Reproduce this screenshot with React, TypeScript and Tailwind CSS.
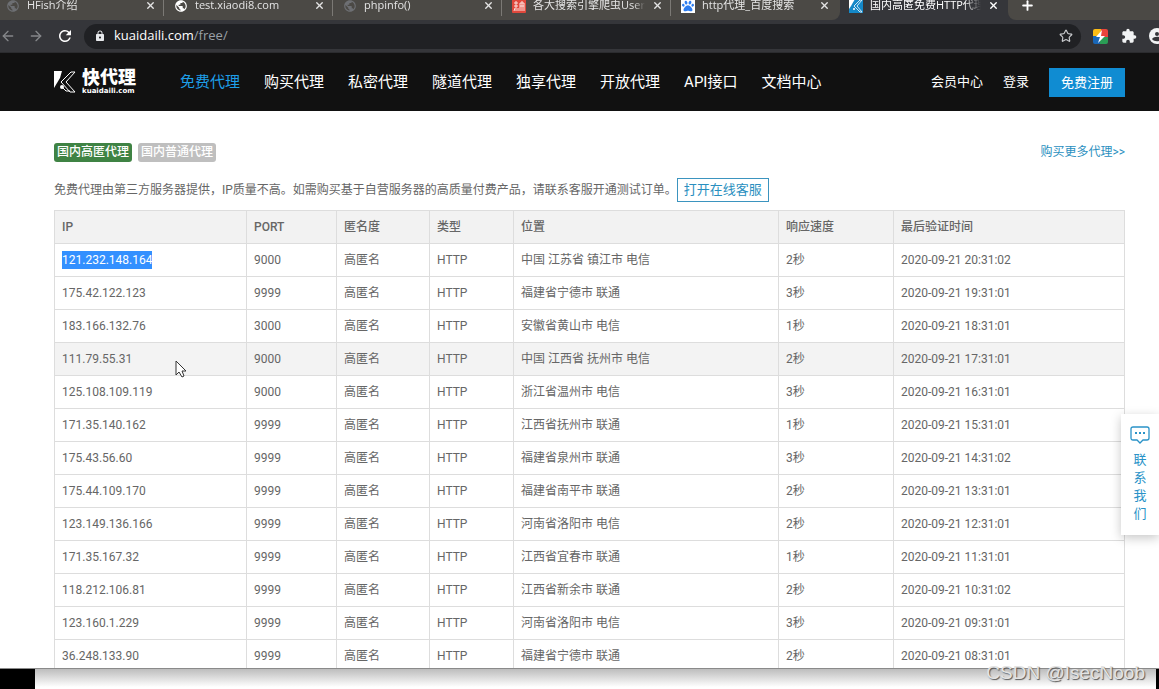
import { ArrowLeft, ArrowRight, Plus, Star, X } from "lucide-react";
import { MdExtension, MdLock, MdPublic, MdRefresh } from "react-icons/md";
import { FaPaw } from "react-icons/fa";

type Favicon = "globe" | "globe-bright" | "red" | "baidu" | "kuai";

interface Tab {
  title: string;
  icon: Favicon;
}

const TABS: Tab[] = [
  { title: "HFish介绍", icon: "globe" },
  { title: "test.xiaodi8.com", icon: "globe-bright" },
  { title: "phpinfo()", icon: "globe" },
  { title: "各大搜索引擎爬虫User-", icon: "red" },
  { title: "http代理_百度搜索", icon: "baidu" },
];

const NAV_ITEMS = ["免费代理", "购买代理", "私密代理", "隧道代理", "独享代理", "开放代理", "API接口", "文档中心"];

const COLUMNS = [
  { label: "IP", width: "w-[192px]" },
  { label: "PORT", width: "w-[90px]" },
  { label: "匿名度", width: "w-[93px]" },
  { label: "类型", width: "w-[84px]" },
  { label: "位置", width: "w-[265px]" },
  { label: "响应速度", width: "w-[115px]" },
  { label: "最后验证时间", width: "" },
];

const PROXIES = [
  { ip: "121.232.148.164", port: 9000, place: "中国 江苏省 镇江市 电信", speed: 2, checked: "20:31:02" },
  { ip: "175.42.122.123", port: 9999, place: "福建省宁德市 联通", speed: 3, checked: "19:31:01" },
  { ip: "183.166.132.76", port: 3000, place: "安徽省黄山市 电信", speed: 1, checked: "18:31:01" },
  { ip: "111.79.55.31", port: 9000, place: "中国 江西省 抚州市 电信", speed: 2, checked: "17:31:01" },
  { ip: "125.108.109.119", port: 9000, place: "浙江省温州市 电信", speed: 3, checked: "16:31:01" },
  { ip: "171.35.140.162", port: 9999, place: "江西省抚州市 联通", speed: 1, checked: "15:31:01" },
  { ip: "175.43.56.60", port: 9999, place: "福建省泉州市 联通", speed: 3, checked: "14:31:02" },
  { ip: "175.44.109.170", port: 9999, place: "福建省南平市 联通", speed: 2, checked: "13:31:01" },
  { ip: "123.149.136.166", port: 9999, place: "河南省洛阳市 电信", speed: 2, checked: "12:31:01" },
  { ip: "171.35.167.32", port: 9999, place: "江西省宜春市 联通", speed: 1, checked: "11:31:01" },
  { ip: "118.212.106.81", port: 9999, place: "江西省新余市 联通", speed: 2, checked: "10:31:02" },
  { ip: "123.160.1.229", port: 9999, place: "河南省洛阳市 电信", speed: 3, checked: "09:31:01" },
  { ip: "36.248.133.90", port: 9999, place: "福建省宁德市 联通", speed: 2, checked: "08:31:01" },
];

const SELECTED_IP = "121.232.148.164";
const HOVERED_IP = "111.79.55.31";

function TabIcon({ icon }: { icon: Favicon }) {
  switch (icon) {
    case "globe":
      return <MdPublic className="size-[14px] shrink-0 text-[#6d6f73]" />;
    case "globe-bright":
      return <MdPublic className="size-[14px] shrink-0 text-white" />;
    case "red":
      return (
        <svg viewBox="0 0 14 14" className="size-[14px] shrink-0">
          <rect width="14" height="14" rx="1" fill="#e0483c" />
          <path d="M2 4h4M4 2v10M2 7h4M2 12l1-3M6 12V9M8 4h4M8 7h4M10 2v10M8 12V4M12 12V4" stroke="#fbe3df" fill="none" />
        </svg>
      );
    case "baidu":
      return (
        <span className="flex size-[14px] shrink-0 items-center justify-center bg-white">
          <FaPaw className="size-3 text-[#2d7df0]" />
        </span>
      );
    case "kuai":
      return (
        <svg viewBox="0 0 14 14" className="size-[14px] shrink-0">
          <rect width="14" height="14" fill="#1488c8" />
          <path d="M0 0h6L2 7l-2 3z" fill="#fff" />
          <path d="M13 1h-2L5 7l6 6h2L8 7z" stroke="#fff" strokeWidth="0.8" fill="none" />
          <circle cx="5" cy="10" r="1" fill="#fff" />
        </svg>
      );
  }
}

function TabBar() {
  return (
    <div className="flex h-5 shrink-0 items-end overflow-hidden text-[11px] text-[#e4e4e4]">
      <div className="flex h-[29px] rounded-br-lg bg-[#4b4945]">
        {TABS.map((tab, i) => (
          <div
            key={tab.title}
            className={`flex items-center gap-[7px] pr-[10px] ${i === 0 ? "w-[164px] pl-[6px]" : "w-[169px] pl-[10px]"}`}
          >
            <TabIcon icon={tab.icon} />
            <span className="min-w-0 flex-1 overflow-hidden whitespace-nowrap mask-r-from-90%">{tab.title}</span>
            <button type="button" aria-label="关闭标签页">
              <X className="size-[11px]" strokeWidth={3} />
            </button>
            {i < TABS.length - 1 && <span className="-mr-[10px] h-5 w-px bg-[#7b7975]" />}
          </div>
        ))}
      </div>
      <div className="flex h-[29px] w-[168px] items-center gap-[7px] pr-[9px] pl-[9px] text-white">
        <TabIcon icon="kuai" />
        <span className="min-w-0 flex-1 overflow-hidden whitespace-nowrap mask-r-from-85%">国内高匿免费HTTP代理</span>
        <button type="button" aria-label="关闭标签页">
          <X className="size-[11px]" strokeWidth={3} />
        </button>
      </div>
      <div className="flex h-[29px] flex-1 items-center rounded-bl-lg bg-[#4b4945] pl-3 text-white">
        <button type="button" aria-label="新标签页">
          <Plus className="size-[15px]" strokeWidth={3} />
        </button>
      </div>
    </div>
  );
}

function AddressBar() {
  return (
    <div className="flex h-[33px] shrink-0 items-center overflow-hidden border-b border-[#2b2c2f] bg-[#35363a]">
      <button type="button" aria-label="后退" className="text-[#85878a]">
        <ArrowLeft className="size-4" />
      </button>
      <button type="button" aria-label="前进" className="ml-3 text-[#85878a]">
        <ArrowRight className="size-4" />
      </button>
      <button type="button" aria-label="刷新" className="ml-3 text-white">
        <MdRefresh className="size-[18px]" />
      </button>
      <div className="ml-[10px] flex h-[25px] flex-1 items-center rounded-full bg-[#202124] pr-2 pl-[10px] text-[13px]">
        <MdLock className="size-3 text-[#e8eaed]" />
        <span className="ml-2 text-white">
          kuaidaili.com<span className="text-[#9aa0a6]">/free/</span>
        </span>
        <button type="button" aria-label="收藏" className="ml-auto text-[#c8cacd]">
          <Star className="size-[14px]" />
        </button>
      </div>
      <svg viewBox="0 0 15 15" className="ml-3 size-[15px]">
        <path d="M0 2a2 2 0 0 1 2-2h6v7H0z" fill="#fbbc16" />
        <path d="M8 0h5a2 2 0 0 1 2 2v6H8z" fill="#e8453c" />
        <path d="M0 7h7v8H2a2 2 0 0 1-2-2z" fill="#1967b8" />
        <path d="M7 8h8v5a2 2 0 0 1-2 2H7z" fill="#2a9d55" />
        <path d="M9 1L3 8h4l-2 6 7-7H8z" fill="#fff" />
      </svg>
      <MdExtension className="ml-[13px] size-4 text-[#f1f3f4]" />
      <div className="ml-3 h-4 w-[10px] overflow-hidden">
        <svg viewBox="0 0 17 17" className="size-[17px]">
          <circle cx="8" cy="8" r="8" fill="#f1f3f4" />
          <circle cx="8" cy="6" r="2" fill="#35363a" />
          <path d="M3 11c2-3 8-3 10 0-2 3-8 3-10 0z" fill="#35363a" />
        </svg>
      </div>
    </div>
  );
}

function Logo() {
  return (
    <a href="#home" className="flex items-center gap-[6px] text-white">
      <svg viewBox="0 0 22 22" className="size-[22px]">
        <path d="M0 0h8L6 7 0 17z" fill="#fff" />
        <path d="M21 1h-4L7 11l9 10h5l-9-10z" stroke="#fff" fill="none" />
        <path d="M8 16l4 4h4" stroke="#fff" fill="none" />
        <circle cx="8" cy="16" r="2" fill="#fff" />
      </svg>
      <span className="flex flex-col">
        <span className="text-[18px] leading-[18px] font-black">快代理</span>
        <span className="font-['DejaVu_Sans'] text-[7px] leading-[8px] font-bold">kuaidaili.com</span>
      </span>
    </a>
  );
}

function SiteHeader() {
  return (
    <header className="flex h-[58px] shrink-0 items-center bg-[#111] pr-[34px] pl-[54px] text-white">
      <Logo />
      <nav className="ml-11 flex gap-6 text-[15px] whitespace-nowrap">
        {NAV_ITEMS.map((item, i) => (
          <a key={item} href="#nav" className={i === 0 ? "text-[#1e9fe8]" : ""}>
            {item}
          </a>
        ))}
      </nav>
      <div className="ml-auto flex items-center gap-5 text-[13px] whitespace-nowrap">
        <a href="#member">会员中心</a>
        <a href="#login">登录</a>
        <a href="#register" className="bg-[#108cd2] px-3 py-1 leading-[21px]">
          免费注册
        </a>
      </div>
    </header>
  );
}

function ProxyTable() {
  return (
    <table className="mt-2 w-full table-fixed border-collapse">
      <thead>
        <tr className="h-[33px] bg-[#f2f2f2]">
          {COLUMNS.map((col) => (
            <th key={col.label} className={`border border-[#ddd] px-[7px] text-left font-medium ${col.width}`}>
              {col.label}
            </th>
          ))}
        </tr>
      </thead>
      <tbody>
        {PROXIES.map((p) => (
          <tr key={p.ip} className={`h-[33px] ${p.ip === HOVERED_IP ? "bg-[#f3f3f3]" : ""}`}>
            <td className="border border-[#ddd] px-[7px]">
              <span className={p.ip === SELECTED_IP ? "bg-[#3390ff] py-[2px] text-white" : ""}>{p.ip}</span>
            </td>
            <td className="border border-[#ddd] px-[7px]">{p.port}</td>
            <td className="border border-[#ddd] px-[7px]">高匿名</td>
            <td className="border border-[#ddd] px-[7px]">HTTP</td>
            <td className="border border-[#ddd] px-[7px]">{p.place}</td>
            <td className="border border-[#ddd] px-[7px]">{p.speed}秒</td>
            <td className="border border-[#ddd] px-[7px]">2020-09-21 {p.checked}</td>
          </tr>
        ))}
      </tbody>
    </table>
  );
}

function ContactWidget() {
  return (
    <button
      type="button"
      className="absolute top-[303px] right-0 flex w-[38px] flex-col items-center bg-white py-3 text-[13px] leading-[18px] text-[#2a93c8] shadow-[0_3px_10px_rgba(0,0,0,0.22)]"
    >
      <svg viewBox="0 0 20 18" className="mb-[7px] h-[18px] w-5" fill="none" stroke="currentColor">
        <path d="M3 1h14q2 0 2 2v9q0 2-2 2h-4l-3 3-3-3H3q-2 0-2-2V3q0-2 2-2z" strokeWidth="1.3" />
        <path d="M5 7h2M9 7h2M13 7h2" strokeWidth="2" />
      </svg>
      {"联系我们".split("").map((ch) => (
        <span key={ch}>{ch}</span>
      ))}
    </button>
  );
}

function Cursor() {
  return (
    <svg viewBox="0 0 12 18" className="absolute top-[249px] left-[175px] h-[18px] w-3">
      <path d="M1 1v14l3-3 3 5 2-1-2-5h4z" fill="#fff" stroke="#333" />
    </svg>
  );
}

export default function App() {
  return (
    <div className="relative flex h-screen flex-col overflow-hidden bg-black font-[Roboto,'Noto_Sans_CJK_SC',sans-serif]">
      <div className="flex min-h-0 flex-1 flex-col overflow-hidden border-b border-[#8a8a8a] bg-[#35363a]">
        <div className="font-['Open_Sans','Noto_Sans_CJK_SC',sans-serif]">
          <TabBar />
          <AddressBar />
        </div>
        <SiteHeader />
        <main className="relative min-h-0 flex-1 bg-white pr-[34px] pl-[54px] text-xs text-[#666]">
          <div className="flex items-start justify-between pt-8">
            <div className="flex gap-[6px] font-medium text-white">
              <a href="#inha" className="rounded-[3px] bg-[#3f8344] px-[3px] leading-[19px]">
                国内高匿代理
              </a>
              <a href="#intr" className="rounded-[3px] bg-[#bfbfbf] px-[3px] leading-[19px]">
                国内普通代理
              </a>
            </div>
            <a href="#buy" className="leading-[18px] text-[#2a8fc0]">
              购买更多代理&gt;&gt;
            </a>
          </div>
          <div className="mt-4 flex items-center whitespace-nowrap">
            <p>免费代理由第三方服务器提供，IP质量不高。如需购买基于自营服务器的高质量付费产品，请联系客服开通测试订单。</p>
            <button type="button" className="border border-[#3b94bf] px-[6px] text-[13px] leading-[22px] text-[#2a8fc0]">
              打开在线客服
            </button>
          </div>
          <ProxyTable />
          <ContactWidget />
          <Cursor />
        </main>
      </div>
      <div className="mr-[3px] ml-[35px] h-5 shrink-0 bg-linear-to-b from-[#bdbdbd] to-white to-90%" />
      <span className="absolute right-[14px] bottom-1 font-['Liberation_Sans'] text-[19px] leading-6 text-[#e3e3e3] [text-shadow:1px_1px_1px_#555]">
        CSDN @IsecNoob
      </span>
    </div>
  );
}
